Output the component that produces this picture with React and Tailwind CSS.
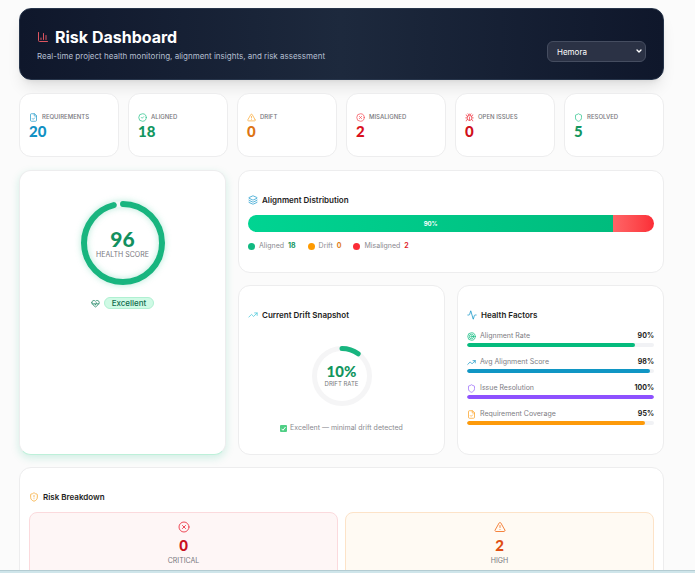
import { useState } from 'react'
import {
  Activity,
  Bug,
  ChartColumn,
  ChevronDown,
  CircleCheck,
  CircleX,
  FileCheck,
  HeartPulse,
  Layers,
  Shield,
  ShieldAlert,
  Target,
  TrendingUp,
  TriangleAlert,
} from 'lucide-react'

const stats = [
  { label: 'Requirements', value: 20, icon: FileCheck, iconColor: 'text-[#2a9dcb]', color: 'text-[#1191c4]' },
  { label: 'Aligned', value: 18, icon: CircleCheck, iconColor: 'text-[#2fc48d]', color: 'text-[#12965f]' },
  { label: 'Drift', value: 0, icon: TriangleAlert, iconColor: 'text-[#fbab3a]', color: 'text-[#dd7413]' },
  { label: 'Misaligned', value: 2, icon: CircleX, iconColor: 'text-[#f5505a]', color: 'text-[#d9101c]' },
  { label: 'Open Issues', value: 0, icon: Bug, iconColor: 'text-[#f0444f]', color: 'text-[#d0101a]' },
  { label: 'Resolved', value: 5, icon: Shield, iconColor: 'text-[#2fc48d]', color: 'text-[#12965f]' },
]

const legend = [
  { label: 'Aligned', value: 18, dot: 'bg-[#10b981]', color: 'text-[#12965f]' },
  { label: 'Drift', value: 0, dot: 'bg-[#fe9a00]', color: 'text-[#e17d1b]' },
  { label: 'Misaligned', value: 2, dot: 'bg-[#fb2c36]', color: 'text-[#e01f2b]' },
]

const factors = [
  { label: 'Alignment Rate', value: 90, icon: Target, iconColor: 'text-[#10bb80]', bar: 'bg-[#05bb7d]' },
  { label: 'Avg Alignment Score', value: 98, icon: TrendingUp, iconColor: 'text-[#1a97c6]', bar: 'bg-[#1096c4]' },
  { label: 'Issue Resolution', value: 100, icon: Shield, iconColor: 'text-[#9a6bfa]', bar: 'bg-[#8e51ff]' },
  { label: 'Requirement Coverage', value: 95, icon: FileCheck, iconColor: 'text-[#fba328]', bar: 'bg-[#fd9a0a]' },
]

const risks = [
  {
    label: 'Critical',
    value: 0,
    icon: CircleX,
    iconColor: 'text-[#ee4a58]',
    color: 'text-[#c9101f]',
    box: 'border-[#fbdadd] bg-[#fef6f6]',
  },
  {
    label: 'High',
    value: 2,
    icon: TriangleAlert,
    iconColor: 'text-[#f5843f]',
    color: 'text-[#e04e12]',
    box: 'border-[#fde3c8] bg-[#fffaf3]',
  },
]

function Card({ className = '', children }) {
  return (
    <section className={`rounded-xl border border-[#ededee] bg-white ${className}`}>{children}</section>
  )
}

function CardTitle({ icon: Icon, iconColor, children }) {
  return (
    <h2 className="flex items-center gap-1 text-[8px] leading-3 font-semibold text-[#1d1d22]">
      <Icon className={`size-[10px] ${iconColor}`} />
      {children}
    </h2>
  )
}

function Ring({ value, size, stroke, track, glow }) {
  const radius = (size - stroke) / 2
  const length = 2 * Math.PI * radius
  return (
    <svg width={size} height={size} className={`-rotate-90 overflow-visible ${glow}`}>
      <circle cx={size / 2} cy={size / 2} r={radius} fill="none" stroke={track} strokeWidth={stroke} />
      <circle
        cx={size / 2}
        cy={size / 2}
        r={radius}
        fill="none"
        stroke="#18b57f"
        strokeWidth={stroke}
        strokeLinecap="round"
        strokeDasharray={`${(length * value) / 100} ${length}`}
      />
    </svg>
  )
}

function App() {
  const [project, setProject] = useState('Hemora')

  return (
    <div className="flex h-screen flex-col overflow-hidden bg-[#fbfbfb] font-['Inter','Liberation_Sans',sans-serif]">
      <main className="min-h-0 flex-1 overflow-hidden pt-2 pr-[31px] pl-[19px]">
        {/* Header */}
        <header className="flex justify-between rounded-xl border border-[#26344a] bg-linear-to-r from-[#0f172b] via-[#1d293d] to-[#0f172b] px-[17px] pt-[18px] pb-[17px] shadow-lg">
          <div>
            <h1 className="flex items-center gap-[6px] text-[16px] leading-5 font-bold text-white">
              <ChartColumn className="size-3 text-[#dd5560]" />
              Risk Dashboard
            </h1>
            <p className="pt-[3px] text-[8px] leading-3 text-[#b4bfcf]">
              Real-time project health monitoring, alignment insights, and risk assessment
            </p>
          </div>
          <div className="relative mt-[14px] h-[21px] w-[99px]">
            <select
              aria-label="Project"
              value={project}
              onChange={(e) => setProject(e.target.value)}
              className="block h-[21px] w-full appearance-none rounded-md border border-[#454d60] bg-[#2b3245] px-[9px] text-[8px] leading-3 text-white"
            >
              <option>Hemora</option>
            </select>
            <ChevronDown
              strokeWidth={4}
              className="pointer-events-none absolute top-[6px] right-[3px] size-2 text-white"
            />
          </div>
        </header>

        {/* Stats */}
        <div className="mt-[13px] grid grid-cols-6 gap-[9px]">
          {stats.map(({ label, value, icon: Icon, iconColor, color }) => (
            <Card key={label} className="px-[9px] pt-[17px] pb-[17px]">
              <div className="flex items-center gap-1 text-[6px] leading-3 font-medium whitespace-nowrap text-[#77777c] uppercase">
                <Icon className={`size-[9px] shrink-0 ${iconColor}`} />
                {label}
              </div>
              <p className={`font-['Lato',sans-serif] text-[15px] leading-4 font-black ${color}`}>{value}</p>
            </Card>
          ))}
        </div>

        <div className="mt-[13px] grid grid-cols-3 gap-3">
          {/* Health score */}
          <Card className="flex flex-col items-center border-b-[#bdf0d9] pt-[30px] shadow-[0_3px_8px_rgba(16,185,129,0.18)]">
            <div className="grid place-items-center *:col-start-1 *:row-start-1">
              <Ring value={96} size={84} stroke={6} track="#f5f7f7" glow="drop-shadow-[0_0_3px_rgba(16,185,129,0.3)]" />
              <div className="pt-1 text-center">
                <p className="font-['Lato',sans-serif] text-[21px] leading-5 font-black text-[#12905f]">96</p>
                <p className="text-[7px] leading-3 text-[#77777c] uppercase">Health Score</p>
              </div>
            </div>
            <div className="mt-3 flex items-center gap-1">
              <HeartPulse className="size-[9px] text-[#17805c]" />
              <span className="rounded-full border border-[#b0f0d2] bg-[#cffae5] px-[7px] text-[8px] leading-[10px] font-medium text-[#0f6b4d]">
                Excellent
              </span>
            </div>
          </Card>

          <div className="col-span-2 grid grid-cols-2 gap-3">
            {/* Alignment distribution */}
            <Card className="col-span-2 px-[9px] pt-[23px] pb-5">
              <CardTitle icon={Layers} iconColor="text-[#35a5d3]">
                Alignment Distribution
              </CardTitle>
              <div className="mt-[9px] flex h-[17px] overflow-hidden rounded-full text-[6px] font-bold text-white">
                <div
                  className="flex items-center justify-center bg-linear-to-r from-[#00d492] to-[#00bc7d]"
                  style={{ width: '90%' }}
                >
                  90%
                </div>
                <div className="flex-1 bg-linear-to-r from-[#ff6467] to-[#fb2c36]" />
              </div>
              <ul className="mt-2 flex gap-3 text-[7px] leading-3 text-[#8a8a90]">
                {legend.map((item) => (
                  <li key={item.label} className="flex items-center gap-1">
                    <span className={`size-[7px] rounded-full ${item.dot}`} />
                    {item.label}
                    <b className={`font-bold ${item.color}`}>{item.value}</b>
                  </li>
                ))}
              </ul>
            </Card>

            {/* Drift */}
            <Card className="px-[9px] pt-[23px] pb-5">
              <CardTitle icon={TrendingUp} iconColor="text-[#55cbdc]">
                Current Drift Snapshot
              </CardTitle>
              <div className="mt-[25px] grid place-items-center *:col-start-1 *:row-start-1">
                <Ring value={10} size={60} stroke={5} track="#f5f5f6" glow="" />
                <div className="text-center">
                  <p className="font-['Lato',sans-serif] text-[15px] leading-4 font-black text-[#12965f]">10%</p>
                  <p className="text-[6px] leading-[10px] text-[#77777c] uppercase">Drift Rate</p>
                </div>
              </div>
              <p className="mt-4 flex items-center justify-center gap-[3px] text-[7px] leading-3 text-[#8a8a90]">
                <svg viewBox="0 0 14 14" className="size-[7px]">
                  <rect width="14" height="14" rx="2" fill="#4fcf85" />
                  <path d="M3 7.5 6 10.5 11 4" fill="none" stroke="#fff" strokeWidth="2" />
                </svg>
                Excellent — minimal drift detected
              </p>
            </Card>

            {/* Health factors */}
            <Card className="px-[9px] pt-[23px] pb-5">
              <CardTitle icon={Activity} iconColor="text-[#239ccb]">
                Health Factors
              </CardTitle>
              <div className="mt-[9px] flex flex-col gap-[9px]">
                {factors.map(({ label, value, icon: Icon, iconColor, bar }) => (
                  <div key={label}>
                    <div className="flex items-center gap-1 text-[7px] leading-3 text-[#7d7d83]">
                      <Icon className={`size-[9px] ${iconColor}`} />
                      {label}
                      <span className="ml-auto font-bold text-[#1d1d22]">{value}%</span>
                    </div>
                    <div className="mt-px h-1 overflow-hidden rounded-full bg-[#f1f2f5]">
                      <div className={`h-full rounded-full ${bar}`} style={{ width: `${value}%` }} />
                    </div>
                  </div>
                ))}
              </div>
            </Card>
          </div>
        </div>

        {/* Risk breakdown */}
        <Card className="mt-3 px-[9px] pt-[23px] pb-6">
          <CardTitle icon={ShieldAlert} iconColor="text-[#f7ad3c]">
            Risk Breakdown
          </CardTitle>
          <div className="mt-[9px] grid grid-cols-2 gap-[7px]">
            {risks.map(({ label, value, icon: Icon, iconColor, color, box }) => (
              <div key={label} className={`flex flex-col items-center rounded-lg border pt-2 pb-3 ${box}`}>
                <Icon className={`size-3 ${iconColor}`} />
                <p className={`pt-1 font-['Lato',sans-serif] text-[15px] leading-4 font-black ${color}`}>{value}</p>
                <p className="pt-[2px] text-[7px] leading-3 text-[#77777c] uppercase">{label}</p>
              </div>
            ))}
          </div>
        </Card>
      </main>
      <div className="h-[3px] shrink-0 border-t border-[#b4ccd2] bg-[#cfe5ea]" />
    </div>
  )
}

export default App
